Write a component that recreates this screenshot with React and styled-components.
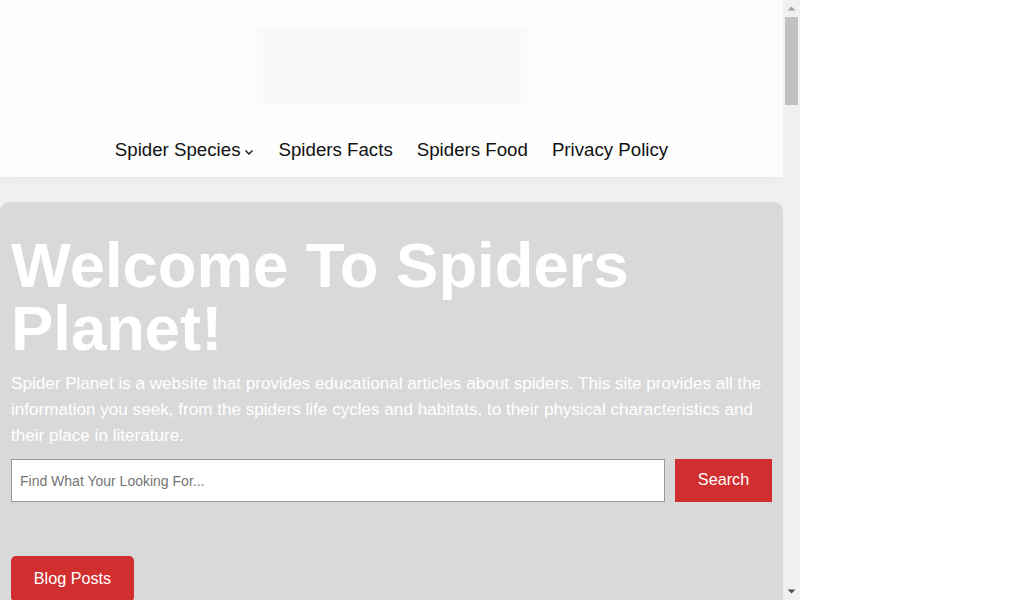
import React from "react";
import styled, { createGlobalStyle } from "styled-components";

const Global = createGlobalStyle`
  html, body { margin: 0; padding: 0; background: #ffffff; }
  body { font-family: "Liberation Sans", Arial, sans-serif; }
  * { box-sizing: border-box; }
`;

const Frame = styled.div`
  width: 800px;
  height: 600px;
  overflow: hidden;
  display: flex;
  background: #f0f0f0;
`;

const Page = styled.div`
  width: 783px;
  flex: none;
  background: #f0f0f0;
`;

const ScrollTrack = styled.div`
  width: 17px;
  height: 600px;
  background: #f1f1f1;
  display: flex;
  flex-direction: column;
  align-items: center;
`;

const ArrowBtn = styled.div`
  width: 17px;
  height: 17px;
  display: flex;
  align-items: center;
  justify-content: center;
`;

const Thumb = styled.div`
  width: 13px;
  height: 88px;
  background: #c1c1c1;
`;

const TrackFill = styled.div`
  flex: 1;
`;

const Header = styled.header`
  background: #fdfdfd;
  box-shadow: 0 0 14px rgba(0, 0, 0, 0.06);
  padding-top: 27px;
  height: 177px;
  display: flex;
  flex-direction: column;
  align-items: center;
`;

const LogoBox = styled.div`
  width: 270px;
  height: 78px;
  background: #f8f9fa;
`;

const Nav = styled.nav`
  margin-top: 33px;
  display: flex;
  gap: 24px;
  align-items: center;
`;

const NavItem = styled.a`
  font-size: 18.7px;
  color: #111;
  text-decoration: none;
  display: flex;
  align-items: center;
  gap: 4px;
  line-height: 24px;
`;

const Chevron = styled.svg`
  width: 10px;
  height: 10px;
  margin-top: 4px;
`;

const Hero = styled.section`
  margin-top: 25px;
  background: #d9d9d9;
  border-radius: 9px;
  padding: 32px 11px 0 11px;
  min-height: 800px;
`;

const Title = styled.h1`
  margin: 0;
  font-size: 63.4px;
  line-height: 63px;
  font-weight: 700;
  color: #ffffff;
`;

const Lead = styled.p`
  margin: 11px 0 0;
  font-size: 17.1px;
  line-height: 26px;
  color: #ffffff;
`;

const SearchRow = styled.form`
  margin-top: 10px;
  display: flex;
  gap: 10px;
`;

const SearchInput = styled.input`
  width: 654px;
  height: 43px;
  border: 1px solid #999;
  background: #fff;
  padding: 0 8px;
  font-family: "Liberation Sans", Arial, sans-serif;
  font-size: 14px;
  &::placeholder { color: #757575; }
`;

const RedButton = styled.button`
  background: #d12f2f;
  color: #fff;
  border: none;
  font-family: "Liberation Sans", Arial, sans-serif;
  font-size: 16.2px;
  padding: 0 0 2px;
  height: ${(p) => p.$h}px;
  width: ${(p) => p.$w}px;
  border-radius: ${(p) => p.$r || 0}px;
  cursor: pointer;
`;

const BlogRow = styled.div`
  margin-top: 54px;
`;

export default function App() {
  return (
    <>
      <Global />
      <Frame>
        <Page>
          <Header>
            <LogoBox />
            <Nav>
              <NavItem href="#">
                Spider Species
                <Chevron viewBox="0 0 10 10">
                  <path d="M1.5 3.5 L5 7 L8.5 3.5" fill="none" stroke="#111" strokeWidth="1.4" />
                </Chevron>
              </NavItem>
              <NavItem href="#">Spiders Facts</NavItem>
              <NavItem href="#">Spiders Food</NavItem>
              <NavItem href="#">Privacy Policy</NavItem>
            </Nav>
          </Header>
          <Hero>
            <Title>Welcome To Spiders Planet!</Title>
            <Lead>
              Spider Planet is a website that provides educational articles about spiders. This site provides all the
              information you seek, from the spiders life cycles and habitats, to their physical characteristics and
              their place in literature.
            </Lead>
            <SearchRow onSubmit={(e) => e.preventDefault()}>
              <SearchInput placeholder="Find What Your Looking For..." />
              <RedButton type="submit" $w={97} $h={43}>Search</RedButton>
            </SearchRow>
            <BlogRow>
              <RedButton type="button" $w={123} $h={46} $r={5}>Blog Posts</RedButton>
            </BlogRow>
          </Hero>
        </Page>
        <ScrollTrack>
          <ArrowBtn>
            <svg width="9" height="5" viewBox="0 0 9 5">
              <path d="M0.5 4.5 L4.5 0.5 L8.5 4.5 Z" fill="#a3a3a3" />
            </svg>
          </ArrowBtn>
          <Thumb />
          <TrackFill />
          <ArrowBtn>
            <svg width="9" height="5" viewBox="0 0 9 5">
              <path d="M0.5 0.5 L8.5 0.5 L4.5 4.5 Z" fill="#505050" />
            </svg>
          </ArrowBtn>
        </ScrollTrack>
      </Frame>
    </>
  );
}
